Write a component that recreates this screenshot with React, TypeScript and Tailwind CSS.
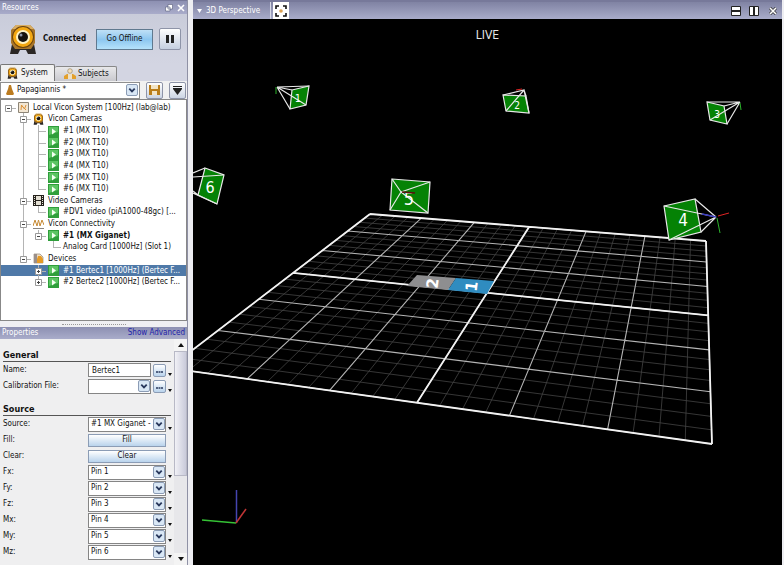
import { useState } from "react";
import type { ReactNode } from "react";

interface TreeRow {
  depth: number;
  icon: "play" | "system" | "camera" | "film" | "wave" | "device" | null;
  label: string;
  toggle?: "minus" | "plus";
  bold?: boolean;
  last?: boolean;
  noGuide?: boolean;
}

const TREE: TreeRow[] = [
  { depth: 0, icon: "system", label: "Local Vicon System [100Hz] (lab@lab)", toggle: "minus" },
  { depth: 1, icon: "camera", label: "Vicon Cameras", toggle: "minus" },
  { depth: 2, icon: "play", label: "#1 (MX T10)" },
  { depth: 2, icon: "play", label: "#2 (MX T10)" },
  { depth: 2, icon: "play", label: "#3 (MX T10)" },
  { depth: 2, icon: "play", label: "#4 (MX T10)" },
  { depth: 2, icon: "play", label: "#5 (MX T10)" },
  { depth: 2, icon: "play", label: "#6 (MX T10)", last: true },
  { depth: 1, icon: "film", label: "Video Cameras", toggle: "minus" },
  { depth: 2, icon: "play", label: "#DV1 video (piA1000-48gc) [...", last: true },
  { depth: 1, icon: "wave", label: "Vicon Connectivity", toggle: "minus" },
  { depth: 2, icon: "play", label: "#1 (MX Giganet)", toggle: "minus", bold: true, last: true },
  { depth: 3, icon: null, label: "Analog Card [1000Hz] (Slot 1)", last: true },
  { depth: 1, icon: "device", label: "Devices", toggle: "minus", last: true },
  { depth: 2, icon: "play", label: "#1 Bertec1 [1000Hz] (Bertec F...", toggle: "plus", noGuide: true },
  { depth: 2, icon: "play", label: "#2 Bertec2 [1000Hz] (Bertec F...", toggle: "plus", last: true, noGuide: true },
];

const PINS = [
  ["Fx:", "Pin 1"],
  ["Fy:", "Pin 2"],
  ["Fz:", "Pin 3"],
  ["Mx:", "Pin 4"],
  ["My:", "Pin 5"],
  ["Mz:", "Pin 6"],
];

type Point = [number, number];

// Corners of the capture floor in view space: back left, back right, front right, front left.
const FLOOR: Point[] = [[370, 214], [706, 241], [712, 444], [169, 368]];

function projector([p0, p1, p2, p3]: Point[]) {
  const dx1 = p1[0] - p2[0];
  const dx2 = p3[0] - p2[0];
  const sx = p0[0] - p1[0] + p2[0] - p3[0];
  const dy1 = p1[1] - p2[1];
  const dy2 = p3[1] - p2[1];
  const sy = p0[1] - p1[1] + p2[1] - p3[1];
  const den = dx1 * dy2 - dx2 * dy1;
  const g = (sx * dy2 - dx2 * sy) / den;
  const h = (dx1 * sy - sx * dy1) / den;
  const a = p1[0] - p0[0] + g * p1[0];
  const b = p3[0] - p0[0] + h * p3[0];
  const d = p1[1] - p0[1] + g * p1[1];
  const e = p3[1] - p0[1] + h * p3[1];
  return (u: number, v: number): Point => {
    const w = g * u + h * v + 1;
    return [(a * u + b * v + p0[0]) / w, (d * u + e * v + p0[1]) / w];
  };
}

const project = projector(FLOOR);
const CELLS = 6;
const SUB = 4;

function floorPath(steps: number[]) {
  return steps
    .map((s) => {
      const t = s / (CELLS * SUB);
      const [a, b, c, d] = [project(t, 0), project(t, 1), project(0, t), project(1, t)];
      return `M${a[0]} ${a[1]}L${b[0]} ${b[1]}M${c[0]} ${c[1]}L${d[0]} ${d[1]}`;
    })
    .join("");
}

const ALL = Array.from({ length: CELLS * SUB + 1 }, (_, i) => i);
const MINOR = floorPath(ALL.filter((i) => i % SUB !== 0));
const MAJOR = floorPath(ALL.filter((i) => i % SUB === 0));
const AXES = floorPath([0, (CELLS * SUB) / 2, CELLS * SUB]);

function CameraIcon({ className }: { className: string }) {
  return (
    <svg viewBox="0 0 28 32" className={className} aria-hidden="true">
      <path d="M3 21 1 31h8l2-4h6l2 4h8l-2-10z" fill="#2b2725" />
      <path d="M7 2h14l5 5v13l-4 6H6l-4-6V7z" fill="#a9762a" />
      <path d="M7 2h14l4 4H3z" fill="#d9ae63" />
      <circle cx="14" cy="14" r="11" fill="#6b430d" />
      <circle cx="14" cy="14" r="8.5" fill="#fff3c4" stroke="#f3a712" strokeWidth="3" />
      <circle cx="14" cy="14" r="5" fill="#17130f" />
      <circle cx="12" cy="12" r="1.5" fill="#8b94a8" />
    </svg>
  );
}

function NodeIcon({ icon }: { icon: TreeRow["icon"] }) {
  switch (icon) {
    case "play":
      return (
        <svg viewBox="0 0 11 11" className="size-[11px] shrink-0" aria-hidden="true">
          <path d="M0 0h11v11H0z" fill="#2f9e3b" />
          <path d="M1 1h9v5L1 9z" fill="#5cc463" />
          <path d="m4 2.5 4 3-4 3z" fill="#f4fff2" />
        </svg>
      );
    case "system":
      return (
        <svg viewBox="0 0 11 11" className="size-[11px] shrink-0" aria-hidden="true">
          <path d="M.5.5h10v10H.5z" fill="#f3e6d2" stroke="#8d8577" />
          <path d="m3 8 .5-5 3 4L8 3M3 3l5 5" fill="none" stroke="#dd9238" />
        </svg>
      );
    case "camera":
      return <CameraIcon className="h-3 w-[11px] shrink-0" />;
    case "film":
      return (
        <svg viewBox="0 0 11 11" className="size-[11px] shrink-0" aria-hidden="true">
          <path d="M0 0h11v11H0z" fill="#26221d" />
          <path d="M3 1h5v4H3zM3 6h5v4H3z" fill="#e3dfd3" />
          <path d="M1.5 1v10M9.5 1v10" stroke="#e9e5da" strokeDasharray="1 1" />
        </svg>
      );
    case "wave":
      return (
        <svg viewBox="0 0 11 11" className="size-[11px] shrink-0" aria-hidden="true">
          <path d="m0 7 2-6 2 6 1.500-6L7 7l2-6 2 5" fill="none" stroke="#c78a34" />
          <path d="M0 9.5h11" stroke="#8a8580" />
        </svg>
      );
    case "device":
      return (
        <svg viewBox="0 0 11 11" className="size-[11px] shrink-0" aria-hidden="true">
          <path d="M1 1h6l3 3v6H1z" fill="#f0dcc0" stroke="#96897a" strokeWidth=".7" />
          <path d="M1 1h3v9H1z" fill="#9a8f8a" />
          <path d="M5 3h3l2 3v4H4V6z" fill="#e59a25" />
        </svg>
      );
    default:
      return null;
  }
}

function TreeItem({ row, selected, onSelect }: { row: TreeRow; selected: boolean; onSelect: () => void }) {
  const guides = Array.from({ length: Math.max(row.depth - 1, 0) });
  return (
    <li className="min-h-0 flex-1">
      <button
        onClick={onSelect}
        className={`flex h-full w-full items-center text-left whitespace-nowrap ${selected ? "bg-[#4f79a8] text-white" : ""} ${row.bold ? "font-bold" : ""}`}
      >
        {row.depth > 0 && <span className="w-[15px] shrink-0" />}
        {guides.map((_, i) => (
          <span key={i} className="flex h-full w-[15px] shrink-0 justify-center">
            {i === 0 && !row.noGuide && <span className="w-px bg-[#b4b4b4]" />}
          </span>
        ))}
        <svg viewBox="0 0 17 12" className="h-3 w-[17px] shrink-0" fill="none" aria-hidden="true">
          {row.depth > 0 && <path d={row.last ? "M7.5 0v6.5" : "M7.5 0v12"} stroke="#b4b4b4" />}
          <path d="M7 6.5h8" stroke="#b4b4b4" />
          {row.toggle && <path d="M4.5 3.5h6v6h-6z" fill="#fff" stroke="#999" />}
          {row.toggle && <path d={row.toggle === "plus" ? "M6 6.5h3M7.5 5v3" : "M6 6.5h3"} stroke="#444" />}
        </svg>
        <NodeIcon icon={row.icon} />
        <span className={row.icon ? "ml-1" : ""}>{row.label}</span>
      </button>
    </li>
  );
}

function Chevron() {
  return (
    <svg viewBox="0 0 11 11" className="pointer-events-none size-[12px] rounded-xs border border-[#8b9cb5] bg-[#d9e7f5]" aria-hidden="true">
      <path d="m2.5 4 3 3 3-3" fill="none" stroke="#28385c" strokeWidth="2" />
    </svg>
  );
}

function MoreMenu({ label }: { label: string }) {
  return (
    <button aria-label={label} className="flex h-3 w-2 items-end justify-center">
      <svg viewBox="0 0 4 3" className="h-[3px] w-1" aria-hidden="true">
        <path d="M0 0h4L2 3z" fill="#111" />
      </svg>
    </button>
  );
}

function Field({ id, label, children, menu = true }: { id: string; label: string; children: ReactNode; menu?: boolean }) {
  return (
    <div className="flex h-4 items-center">
      <label htmlFor={id} className="min-w-0 flex-1 whitespace-nowrap">{label}</label>
      <div className="flex w-[78px] items-center">{children}</div>
      {menu ? <MoreMenu label={`${label} options`} /> : <span className="w-2" />}
    </div>
  );
}

function Select({ id, value }: { id: string; value: string }) {
  return (
    <div className="relative flex min-w-0 flex-1 items-center">
      <select id={id} className="h-[15px] w-full appearance-none border border-[#858585] bg-white pl-0.5 outline-none">
        <option>{value}</option>
      </select>
      <span className="pointer-events-none absolute right-px">
        <Chevron />
      </span>
    </div>
  );
}

function Browse({ label }: { label: string }) {
  return (
    <button aria-label={label} className="ml-0.5 flex h-[13px] w-[13px] items-end justify-center rounded-xs border border-[#8b9cb5] bg-gradient-to-b from-white to-[#b9d3ec] pb-[3px]">
      <svg viewBox="0 0 7 2" className="h-0.5 w-[7px]" aria-hidden="true">
        <path d="M0 1h7" stroke="#28385c" strokeWidth="1.5" strokeDasharray="2 .5" />
      </svg>
    </button>
  );
}

function Resources() {
  const [selected, setSelected] = useState(14);
  return (
    <section className="flex flex-col">
      <header className="flex h-[14px] items-center justify-between border-t border-[#77799a] bg-gradient-to-b from-[#8d90b2] to-[#a9acca] px-0.5 text-white">
        <h2>Resources</h2>
        <div className="flex gap-1">
          <button aria-label="Float">
            <svg viewBox="0 0 8 8" className="size-2" aria-hidden="true">
              <path d="M3 .5h4.500V5H3zM.5 3H5v4H.5z" fill="#fff" stroke="#555a78" strokeWidth=".6" />
            </svg>
          </button>
          <button aria-label="Close resources">
            <svg viewBox="0 0 8 8" className="size-2" aria-hidden="true">
              <path d="m1 1 6 6m0-6L1 7" stroke="#fff" strokeWidth="1.6" />
            </svg>
          </button>
        </div>
      </header>

      {/* Connection status */}
      <div className="flex h-[50px] items-center bg-gradient-to-b from-[#c9ccda] to-[#d3d5e2] pr-[6px] pl-[9px]">
        <CameraIcon className="h-8 w-7" />
        <span className="ml-[6px] flex-1 font-bold">Connected</span>
        <button className="h-[21px] w-[57px] border border-[#60798f] bg-gradient-to-b from-[#bfe0f6] via-[#8cc6ef] to-[#b5e2fb]">Go Offline</button>
        <button aria-label="Pause" className="ml-[6px] flex h-[22px] w-[22px] items-center justify-center rounded-xs border border-[#8e94a8] bg-gradient-to-b from-white to-[#c5cfe0]">
          <svg viewBox="0 0 8 8" className="size-2" aria-hidden="true">
            <path d="M0 0h3v8H0zM5 0h3v8H5z" fill="#222" />
          </svg>
        </button>
      </div>

      {/* Tabs */}
      <div role="tablist" className="flex h-[17px] items-end bg-[#d3d5e2]">
        <button role="tab" aria-selected="true" className="flex h-[17px] w-[55px] items-center gap-[3px] rounded-t-xs border border-b-0 border-[#777] bg-[#f1f1f1] pl-[6px]">
          <CameraIcon className="h-3 w-[11px]" />
          System
        </button>
        <button role="tab" aria-selected="false" className="flex h-[15px] w-[62px] items-center gap-0.5 rounded-t-xs border border-b-0 border-l-0 border-[#888] bg-gradient-to-b from-[#e8e8ea] to-[#c9c9ce] pl-[9px]">
          <svg viewBox="0 0 12 12" className="size-3" aria-hidden="true">
            <circle cx="6" cy="3" r="2.3" fill="#f3dfba" stroke="#9b8a6c" strokeWidth=".7" />
            <path d="M0 11V8l3-2h6l3 2v3z" fill="#e3a02b" />
            <path d="M4 6h4v5H4z" fill="#eee0c4" />
          </svg>
          Subjects
        </button>
      </div>

      {/* Configuration */}
      <div className="flex h-[18px] items-center bg-[#f1f1f1]">
        <div className="relative flex h-[17px] min-w-0 flex-1 items-center border border-[#8f8f8f] bg-white pl-[5px]">
          <svg viewBox="0 0 8 10" className="h-[10px] w-2 shrink-0" aria-hidden="true">
            <path d="M3 0h2l1 4 2 5-1 1H1L0 9l2-5z" fill="#bb7b20" />
          </svg>
          <select aria-label="Configuration" className="ml-[3px] w-full appearance-none outline-none">
            <option>Papagiannis *</option>
          </select>
          <span className="pointer-events-none absolute right-px">
            <Chevron />
          </span>
        </div>
        <button aria-label="Save" className="ml-[6px] flex size-[17px] items-center justify-center rounded-xs border border-[#8e94a8] bg-gradient-to-b from-white to-[#ccd5e4]">
          <svg viewBox="0 0 11 10" className="h-[10px] w-[11px]" aria-hidden="true">
            <path d="M0 0h11v10H0z" fill="#ba7d19" />
            <path d="M2 0h7v4H2zM3 6h5v4H3z" fill="#f2e4c5" />
          </svg>
        </button>
        <button aria-label="Configuration menu" className="mr-px ml-[6px] flex size-[17px] items-center justify-center rounded-xs border border-[#8e94a8] bg-gradient-to-b from-white to-[#ccd5e4]">
          <svg viewBox="0 0 9 9" className="size-[9px]" aria-hidden="true">
            <path d="M0 .5h9M0 2.5h9" stroke="#222" />
            <path d="M0 3h9L4.500 9z" fill="#222" />
          </svg>
        </button>
      </div>

      <div className="border border-[#888] bg-white pt-0.5 pb-8">
        <ul className="flex h-[186px] flex-col">
          {TREE.map((row, i) => (
            <TreeItem key={row.label} row={row} selected={i === selected} onSelect={() => setSelected(i)} />
          ))}
        </ul>
      </div>
    </section>
  );
}

function Properties() {
  return (
    <section className="flex flex-1 flex-col">
      <header className="flex h-3 items-center justify-between bg-gradient-to-b from-[#8d90b2] to-[#a9acca] px-0.5">
        <h2 className="text-white">Properties</h2>
        <a href="#advanced" className="text-[#2222a8]">Show Advanced</a>
      </header>
      <div className="flex flex-1 bg-[#efeff0]">
        <form className="flex-1 pt-[10px] pl-[3px]">
          <h3 className="mr-[3px] border-b border-[#555] text-[9px] font-bold">General</h3>
          <Field id="name" label="Name:">
            <input id="name" defaultValue="Bertec1" className="h-[14px] w-0 flex-1 border border-[#858585] bg-white pl-[3px] outline-none" />
            <Browse label="Edit name" />
          </Field>
          <Field id="calibration" label="Calibration File:">
            <Select id="calibration" value="" />
            <Browse label="Browse calibration file" />
          </Field>
          <h3 className="mt-[9px] mr-[3px] border-b border-[#555] text-[9px] font-bold">Source</h3>
          <Field id="source" label="Source:">
            <Select id="source" value="#1 MX Giganet -" />
          </Field>
          <Field id="fill" label="Fill:" menu={false}>
            <button id="fill" type="button" className="h-[13px] w-full border border-[#8b9cb5] bg-gradient-to-b from-white to-[#b9d3ec] leading-[10px]">Fill</button>
          </Field>
          <Field id="clear" label="Clear:" menu={false}>
            <button id="clear" type="button" className="h-[13px] w-full border border-[#8b9cb5] bg-gradient-to-b from-white to-[#b9d3ec] leading-[10px]">Clear</button>
          </Field>
          {PINS.map(([label, value]) => (
            <Field key={label} id={label} label={label}>
              <Select id={label} value={value} />
            </Field>
          ))}
        </form>
        <div className="flex w-[13px] flex-col justify-between bg-[#e7e7ea]">
          <div className="flex h-[137px] flex-col">
            <span className="flex h-3 items-center justify-center bg-[#f4f4f4]">
              <svg viewBox="0 0 6 4" className="h-1 w-[6px]" aria-hidden="true"><path d="M0 4h6L3 0z" fill="#111" /></svg>
            </span>
            <span className="flex-1 border border-[#b8b9c6] bg-gradient-to-r from-[#f1f1f6] to-[#c9cada]" />
          </div>
          <span className="flex h-3 items-center justify-center bg-[#f4f4f4]">
            <svg viewBox="0 0 6 4" className="h-1 w-[6px]" aria-hidden="true"><path d="M0 0h6L3 4z" fill="#111" /></svg>
          </span>
        </div>
      </div>
    </section>
  );
}

function Scene() {
  return (
    <svg viewBox="193 19 589 546" className="h-full w-full" fill="none" role="img" aria-label="Capture volume">
      <path d={MINOR} stroke="#444" strokeWidth=".8" />
      <path d={MAJOR} stroke="#b5b5b5" strokeWidth="1.1" />
      <path d={AXES} stroke="#f2f2f2" strokeWidth="1.8" />

      {/* Force plates */}
      <path d="m417 275 39 3-8 12-41-4z" fill="#8e8e90" />
      <path d="m456 278 38 3-7 13-39-4z" fill="#2f8cc0" />
      <g fill="#fff" fontSize="16" fontWeight="bold" textAnchor="middle">
        <text transform="translate(438 284) rotate(-83)">2</text>
        <text transform="translate(477 287) rotate(-83)">1</text>
      </g>

      {/* Cameras */}
      <g fill="#058205" stroke="#e8e8e8" strokeWidth="1.2">
        <path d="m292 90 17-4-3 19-16 4z" />
        <path d="m503 95 23 1 3 17-23-2z" />
        <path d="m707 102 17 4 3 18-17-4z" />
        <path d="m205 168 19 7-7 29-19-9z" />
        <path d="m392 179 38 3-2 31-38-3z" />
        <path d="m664 206 31-7 6 33-32 8z" />
        <path d="m277 87 15 3m-15-3 13 22m-13-22 29 18m-29-18 32-1" fill="none" />
        <path d="m503 95 21-5 2 6m-2-6-18 21m18-21 5 23" fill="none" />
        <path d="m740 102-16 4m16-4-33 0m33 0-13 22m13-22-30 18" fill="none" />
        <path d="m193 173 12-5m-12 9 31-2m-31 16 5 4m-5-2 24 11" fill="none" />
        <path d="m401 192-9-13m9 13 29-10m-29 10-11 18m11-18 27 21" fill="none" />
        <path d="m716 217-21-18m21 18-52-11m52 11-15 15m15-15-47 23" fill="none" />
      </g>
      <g fill="#fff" textAnchor="middle">
        <text x="298" y="102" fontSize="11">1</text>
        <text x="517" y="109" fontSize="10">2</text>
        <text x="717" y="118" fontSize="10">3</text>
        <text x="210" y="193" fontSize="16">6</text>
        <text x="409" y="205" fontSize="18">5</text>
        <text x="683" y="226" fontSize="17">4</text>
      </g>
      <path d="m402 192 13 1" stroke="#5a1010" strokeWidth="1.5" />
      <path d="m718 216 11-3M516 90l6-1" stroke="#e02424" />
      <path d="m717 218 3 15M276 87v7M740 103l1 7" stroke="#2bb32b" />
      <path d="m702 214 14 3" stroke="#3b3bc0" strokeWidth="1.5" />

      {/* World axes */}
      <path d="M236.5 523V490" stroke="#4545b0" strokeWidth="1.5" />
      <path d="m236 523-34-3" stroke="#35c235" strokeWidth="1.5" />
      <path d="m236 523 10-14" stroke="#c03535" strokeWidth="1.5" />
    </svg>
  );
}

function Viewport() {
  return (
    <main className="flex min-w-0 flex-1 flex-col bg-black">
      <header className="flex h-[19px] items-stretch border-t-2 border-[#77799a] bg-gradient-to-b from-[#8083a3] to-[#a9acca] text-white">
        <button className="flex w-[78px] items-center gap-1 border-r border-[#d6d8e6] pl-1">
          <svg viewBox="0 0 5 4" className="h-1 w-[5px]" aria-hidden="true"><path d="M0 0h5L2.500 4z" fill="#fff" /></svg>
          3D Perspective
        </button>
        <button aria-label="Fit view" className="ml-0.5 flex w-4 items-center justify-center bg-white">
          <svg viewBox="0 0 14 14" className="size-[14px]" fill="none" aria-hidden="true">
            <path d="M2 5V2h3M9 2h3v3M12 9v3H9M5 12H2V9" stroke="#111" strokeWidth="1.6" />
            <circle cx="7" cy="7" r="1.8" fill="#dca052" />
          </svg>
        </button>
        <div className="ml-auto flex items-center gap-2 pr-[5px]">
          <button aria-label="Split horizontally">
            <svg viewBox="0 0 10 10" className="size-[10px]" aria-hidden="true">
              <path d="M.5.5h9v9h-9z" fill="#fff" stroke="#222" /><path d="M1 5h8" stroke="#222" strokeWidth="2" />
            </svg>
          </button>
          <button aria-label="Split vertically">
            <svg viewBox="0 0 10 10" className="size-[10px]" aria-hidden="true">
              <path d="M.5.5h9v9h-9z" fill="#fff" stroke="#222" /><path d="M5 1v8" stroke="#222" strokeWidth="2" />
            </svg>
          </button>
          <button aria-label="Close view" className="ml-0.5">
            <svg viewBox="0 0 8 8" className="size-2" aria-hidden="true">
              <path d="m1 1 6 6m0-6L1 7" stroke="#333" strokeWidth="3" /><path d="m1 1 6 6m0-6L1 7" stroke="#fff" strokeWidth="1.6" />
            </svg>
          </button>
        </div>
      </header>
      <div className="relative flex-1">
        <Scene />
        <p className="absolute inset-x-0 top-2 text-center text-[12px] leading-4 text-[#e5e5e5]">LIVE</p>
      </div>
    </main>
  );
}

export default function App() {
  return (
    <div className="flex min-h-screen bg-[#eeeef2] pr-0.5 font-['DejaVu_Sans_Condensed','Open_Sans',sans-serif] text-[8px] leading-3 text-[#111]">
      <aside className="mr-[5px] flex w-[188px] shrink-0 flex-col border-r border-[#8f91a5] bg-[#efeff2]">
        <Resources />
        <div className="flex h-[6px] items-center justify-center">
          <span className="w-16 border-t border-dotted border-[#999]" />
        </div>
        <Properties />
      </aside>
      <Viewport />
    </div>
  );
}
